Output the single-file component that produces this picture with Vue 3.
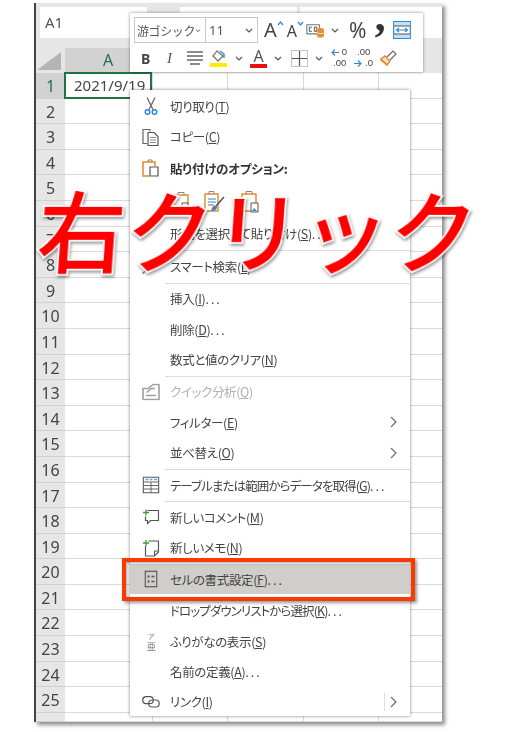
<script setup>
const rows = Array.from({ length: 26 }, (_, i) => i + 1)
const cols = [0, 1, 2, 3, 4]
</script>

<template>
  <div class="page">
    <div class="sheet">
      <div class="formula">
        <div class="namebox">A1</div>
        <div class="fbox second"></div>
        <div class="fbox third"></div>
      </div>
      <div class="headrow">
        <div class="corner"><i></i></div>
        <div class="colhead active">A</div>
        <div class="colhead b-col"></div>
        <div class="colhead c-col"></div>
        <div class="colhead d-col"></div>
        <div class="colhead e-col"></div>
      </div>
      <div v-for="r in rows" :key="r" class="row" :class="{ last: r === 26 }">
        <div class="rowhead" :class="{ active: r === 1 }">{{ r < 26 ? r : '' }}</div>
        <div v-for="c in cols" :key="c" class="cell" :class="'c' + c">
          <span v-if="r === 1 && c === 0" class="date">2021/9/19</span>
        </div>
      </div>

      <!-- mini toolbar -->
      <div class="mini">
        <div class="minirow">
          <div class="select font"><span>游ゴシック</span><svg width="8" height="5" viewBox="0 0 8 5"><path d="M1 1l3 3 3-3" class="chev"/></svg></div>
          <div class="select size"><span>11</span><svg width="8" height="5" viewBox="0 0 8 5"><path d="M1 1l3 3 3-3" class="chev"/></svg></div>
          <div class="grow"><span class="bigA">A</span><svg width="7" height="5" viewBox="0 0 7 5"><path d="M1 4l2.500-3L6 4" fill="none" stroke="#2b88d8" stroke-width="1.200"/></svg></div>
          <div class="shrink"><span class="smallA">A</span><svg width="7" height="5" viewBox="0 0 7 5"><path d="M1 1l2.500 3L6 1" fill="none" stroke="#2b88d8" stroke-width="1.200"/></svg></div>
          <svg class="ic cells" width="20" height="17" viewBox="0 0 24 20">
            <path d="M1 3h15v11H1z" fill="none" stroke="#777" stroke-width="1.300"/>
            <path d="M4 6h3M4 6v5h3M10 6h3v5h-3z" fill="none" stroke="#555" stroke-width="1.200"/>
            <ellipse cx="17.500" cy="9" rx="4" ry="2" fill="#ed8b2d"/>
            <path d="M13.500 9v8c0 2 8 2 8 0V9" fill="#ed8b2d"/>
            <path d="M14 13c2 1 5 1 7 0" stroke="#fff" fill="none"/>
          </svg>
          <svg class="chevs c-a" width="8" height="5" viewBox="0 0 8 5"><path d="M1 1l3 3 3-3" class="chev"/></svg>
          <span class="percent">%</span>
          <span class="comma">’</span>
          <svg class="ic wrapcol" width="18" height="18" viewBox="0 0 18 18">
            <path d="M.7.7h16.600v16.600H.7z" fill="#fff" stroke="#2b88d8" stroke-width="1.200"/>
            <path d="M1 1h16v4H1zM1 13h16v4H1z" fill="#bfe0f5"/>
            <path d="M1 5h16M1 13h16" stroke="#555"/>
            <path d="M3.500 9h11M6 7L3.500 9 6 11M12 7l2.500 2L12 11" fill="none" stroke="#2b88d8" stroke-width="1.100"/>
          </svg>
        </div>
        <div class="minirow second-row">
          <span class="b">B</span>
          <span class="i">I</span>
          <svg class="ic align" width="16" height="14" viewBox="0 0 16 14"><path d="M0 1h16M0 5h16M0 9h16M3 13h10" stroke="#666" stroke-width="1.300"/></svg>
          <div class="stack fill">
            <svg width="14" height="13" viewBox="0 0 14 13"><path d="M5 1L1 6l5 5 5-5z" fill="none" stroke="#666" stroke-width="1.200"/><path d="M8 1l4 3v4" fill="none" stroke="#2b88d8" stroke-width="1.400"/></svg>
            <i class="yellow"></i>
          </div>
          <svg class="chevs c-b" width="8" height="5" viewBox="0 0 8 5"><path d="M1 1l3 3 3-3" class="chev"/></svg>
          <div class="stack color"><span>A</span><i class="red"></i></div>
          <svg class="chevs c-c" width="8" height="5" viewBox="0 0 8 5"><path d="M1 1l3 3 3-3" class="chev"/></svg>
          <svg class="ic border" width="17" height="17" viewBox="0 0 17 17"><path d="M.5.500h16v16H.5z" fill="none" stroke="#888" stroke-dasharray="1 1"/><path d="M8.500 1v15M1 8.500h15" stroke="#555" stroke-width="1.200"/></svg>
          <svg class="chevs c-c" width="8" height="5" viewBox="0 0 8 5"><path d="M1 1l3 3 3-3" class="chev"/></svg>
          <div class="dec"><svg width="8" height="7" viewBox="0 0 8 7"><path d="M8 3.500H1M4 .5l-3 3 3 3" fill="none" stroke="#2b88d8" stroke-width="1.100"/></svg><span class="d0">0</span><span class="d00">.00</span></div>
          <div class="dec dec2"><span class="d00b">.00</span><svg width="8" height="7" viewBox="0 0 8 7"><path d="M0 3.500h7M4 .5l3 3-3 3" fill="none" stroke="#2b88d8" stroke-width="1.100"/></svg><span class="d0b">.0</span></div>
          <svg class="ic brush" width="18" height="17" viewBox="0 0 18 17"><path d="M2 9l6 6 3-4-5-5z" fill="#fbe3c8" stroke="#e8862a" stroke-width="1.400"/><path d="M2 9l-1 1 7 6 1-1" fill="#e8862a"/><path d="M8 7l6-6 3 3-6 6" fill="#fff" stroke="#666" stroke-width="1.100"/></svg>
        </div>
      </div>

      <!-- context menu -->
      <div class="menu">
        <div class="item">
          <svg class="mi" width="16" height="19" viewBox="0 0 16 19"><path d="M4 1l6 12M12 1L6 13" fill="none" stroke="#666" stroke-width="1.300"/><circle cx="4.500" cy="15.500" r="2.300" fill="none" stroke="#2b88d8" stroke-width="1.400"/><circle cx="11.500" cy="15.500" r="2.300" fill="none" stroke="#2b88d8" stroke-width="1.400"/></svg>
          <span>切り取り(<u>T</u>)</span>
        </div>
        <div class="item">
          <svg class="mi" width="18" height="19" viewBox="0 0 18 19"><path d="M5 16H1V2h7v2" fill="none" stroke="#666" stroke-width="1.200"/><path d="M6 5h6l4 4v9H6z" fill="#fff" stroke="#555" stroke-width="1.200"/><path d="M8 10h6M8 12.500h6M8 15h6" stroke="#888"/></svg>
          <span>コピー(<u>C</u>)</span>
        </div>
        <div class="item head">
          <svg class="mi" width="18" height="20" viewBox="0 0 18 20"><path d="M5 3H1v14h6" fill="none" stroke="#e8862a" stroke-width="1.500"/><path d="M5 3h8v4" fill="none" stroke="#e8862a" stroke-width="1.500"/><path d="M6 3V1h4v2" fill="none" stroke="#888"/><path d="M8 8h8v9H8z" fill="#fff" stroke="#555" stroke-width="1.200"/></svg>
          <b>貼り付けのオプション:</b>
        </div>
        <div class="pastes">
          <svg width="18" height="22" viewBox="0 0 18 22"><path d="M2 4h14v17H2z" fill="#fff" stroke="#e8862a" stroke-width="1.400"/><path d="M6 4V1.500h6V4" fill="none" stroke="#888"/><path d="M10 12h6v8h-6z" fill="#fff" stroke="#555"/></svg>
          <svg width="24" height="24" viewBox="0 0 24 24"><path d="M2 4h13v17H2z" fill="#fff" stroke="#e8862a" stroke-width="1.400"/><path d="M6 4V1.500h5V4" fill="none" stroke="#888"/><path d="M5 9h8M5 12h8" stroke="#2b88d8"/><path d="M5 15h6" stroke="#e0443e"/><path d="M21 7l-8 9" stroke="#555" stroke-width="1.600"/><path d="M9 18c2-3 4-3 5-1 0 3-3 4-6 4z" fill="#2b88d8"/></svg>
          <svg width="20" height="24" viewBox="0 0 20 24"><path d="M2 4h14v17H2z" fill="#fff" stroke="#e8862a" stroke-width="1.400"/><path d="M6 4V1.500h6V4" fill="none" stroke="#888"/><path d="M11 13h7v9h-7z" fill="#fff" stroke="#555"/><path d="M12 21l2-3 3 3z" fill="#2b88d8"/></svg>
        </div>
        <div class="item"><span>形式を選択して貼り付け(<u>S</u>)<span class="dots">...</span></span></div>
        <div class="sep"></div>
        <div class="item">
          <svg class="mi" width="19" height="19" viewBox="0 0 19 19"><path d="M1 17l6-5" stroke="#2b88d8" stroke-width="1.500"/><circle cx="11" cy="8" r="5" fill="none" stroke="#2b88d8" stroke-width="1.300"/></svg>
          <span>スマート検索(<u>L</u>)</span>
        </div>
        <div class="sep"></div>
        <div class="item"><span>挿入(<u>I</u>)<span class="dots">...</span></span></div>
        <div class="item"><span>削除(<u>D</u>)<span class="dots">...</span></span></div>
        <div class="item"><span>数式と値のクリア(<u>N</u>)</span></div>
        <div class="sep"></div>
        <div class="item off">
          <svg class="mi" width="18" height="17" viewBox="0 0 18 17"><path d="M1 5h5l5-4h6v15H1z" fill="none" stroke="#a0a0a0" stroke-width="1.600"/><path d="M4 12h10M5 9l4-4h4" fill="none" stroke="#a0a0a0" stroke-width="1.600"/></svg>
          <span>クイック分析(<u>Q</u>)</span>
        </div>
        <div class="item"><span>フィルター(<u>E</u>)</span><svg class="arrow" width="7" height="11" viewBox="0 0 7 11"><path d="M1 .5l5 5-5 5" fill="none" stroke="#666" stroke-width="1.100"/></svg></div>
        <div class="item"><span>並べ替え(<u>O</u>)</span><svg class="arrow" width="7" height="11" viewBox="0 0 7 11"><path d="M1 .5l5 5-5 5" fill="none" stroke="#666" stroke-width="1.100"/></svg></div>
        <div class="sep"></div>
        <div class="item tight">
          <svg class="mi" width="17" height="17" viewBox="0 0 17 17"><path d="M.7.700h15.600v15.600H.7z" fill="#fff" stroke="#555" stroke-width="1.300"/><path d="M3 3h3M7.500 3h2.500M11.500 3h3" stroke="#5aa7e0" stroke-width="1.500"/><path d="M1 5.500h15M1 9h15M1 12.500h15M8.500 5.500v11" stroke="#666"/></svg>
          <span>テーブルまたは範囲からデータを取得(<u>G</u>)<span class="dots">...</span></span>
        </div>
        <div class="sep"></div>
        <div class="item">
          <svg class="mi" width="17" height="17" viewBox="0 0 17 17"><path d="M5 2h11v10H8l-3 3v-3H3V8" fill="none" stroke="#555" stroke-width="1.200"/><path d="M3.500 1v6M.5 4h6" stroke="#3c9a3c" stroke-width="1.300"/></svg>
          <span>新しいコメント(<u>M</u>)</span>
        </div>
        <div class="item">
          <svg class="mi" width="17" height="18" viewBox="0 0 17 18"><path d="M6 2h10v11l-4 4H3V7" fill="none" stroke="#555" stroke-width="1.200"/><path d="M16 12h-4v5" fill="none" stroke="#555"/><path d="M3.500 1v6M.5 4h6" stroke="#3c9a3c" stroke-width="1.300"/></svg>
          <span>新しいメモ(<u>N</u>)</span>
        </div>
        <div class="item selected">
          <svg class="mi" width="13" height="17" viewBox="0 0 13 17"><path d="M.6.600h11.800v15.800H.6z" fill="none" stroke="#444" stroke-width="1.200"/><path d="M3 5h2v2H3zM3 10h2v2H3z" fill="#555"/><path d="M7 6h3M7 11h3" stroke="#555" stroke-width="1.300"/></svg>
          <span>セルの書式設定(<u>F</u>)<span class="dots">...</span></span>
        </div>
        <div class="item tight"><span>ドロップダウン<span class="gap"> </span>リストから選択(<u>K</u>)<span class="dots">...</span></span></div>
        <div class="item">
          <span class="mi ruby"><small>ア</small><em>亜</em></span>
          <span>ふりがなの表示(<u>S</u>)</span>
        </div>
        <div class="item"><span>名前の定義(<u>A</u>)<span class="dots">...</span></span></div>
        <div class="item">
          <svg class="mi" width="18" height="12" viewBox="0 0 18 12"><rect x=".7" y=".7" width="10.500" height="7" rx="3.500" fill="none" stroke="#555" stroke-width="1.200"/><rect x="6.700" y="4" width="10.500" height="7" rx="3.500" fill="none" stroke="#555" stroke-width="1.200"/></svg>
          <span>リンク(<u>I</u>)</span>
          <i class="vbar"></i>
          <svg class="arrow" width="7" height="11" viewBox="0 0 7 11"><path d="M1 .5l5 5-5 5" fill="none" stroke="#666" stroke-width="1.100"/></svg>
        </div>
      </div>
      <div class="highlight"></div>
    </div>
    <div class="title"><span>右</span><span>ク</span><span>リ</span><span>ッ</span><span>ク</span></div>
  </div>
</template>

<style>
html, body { margin: 0; background: #fff; }
</style>

<style scoped>
.page {
  position: relative;
  width: 528px;
  height: 732px;
  overflow: hidden;
  background: #fff;
  font-family: "Noto Sans CJK JP", "Noto Sans", sans-serif;
  color: #444;
}
.sheet {
  position: absolute;
  left: 34px;
  top: 3px;
  width: 408px;
  height: 719px;
  box-sizing: border-box;
  border-left: 2px solid #444;
  background: #fff;
  box-shadow: 3px 3px 4px rgba(0, 0, 0, .45);
  filter: blur(.35px);
}
.formula {
  height: 35px;
  background: #e6e6e6;
  display: flex;
  padding: 4px 0 0 4px;
  box-sizing: border-box;
}
.namebox {
  width: 107px;
  height: 31px;
  background: #fff;
  box-sizing: border-box;
  padding-left: 5px;
  font: 15px/31px "Noto Sans", sans-serif;
  color: #555;
}
.fbox { height: 31px; background: #fff; }
.second { width: 117px; margin-left: 33px; }
.third { flex: 1; margin-left: 3px; }
.headrow {
  display: flex;
  height: 35px;
  background: #e6e6e6;
  box-sizing: border-box;
  padding-top: 10px;
}
.corner { width: 29px; position: relative; }
.corner i {
  position: absolute;
  left: 1px;
  top: 4px;
  border-style: solid;
  border-width: 0 0 18px 24px;
  border-color: transparent transparent #b4b4b4 transparent;
}
.colhead {
  text-align: center;
  font: 16px/25px "Noto Sans", sans-serif;
  box-sizing: border-box;
  border-right: 1px solid #d4d4d4;
}
.colhead.active { width: 87px; background: #d2d2d2; color: #217346; }
.colhead.b-col { width: 75px; }
.colhead.c-col { width: 76px; }
.colhead.d-col { width: 75px; }
.colhead.e-col { flex: 1; border: 0; }
.row {
  display: flex;
  height: 25.6px;
  box-sizing: border-box;
}
.row.last { height: 9px; overflow: hidden; }
.rowhead {
  width: 29px;
  background: #e6e6e6;
  text-align: center;
  font: 16px/26px "Noto Sans", sans-serif;
  border-bottom: 1px solid #d0d0d0;
  box-sizing: border-box;
  color: #444;
}
.rowhead.active { background: #d2d2d2; color: #217346; }
.cell {
  box-sizing: border-box;
  border-right: 1px solid #d9d9d9;
  border-bottom: 1px solid #d9d9d9;
  position: relative;
}
.c0 { width: 88px; }
.c1 { width: 75px; }
.c2 { width: 76px; }
.c3 { width: 75px; }
.c4 { flex: 1; border-right: 0; }
.date {
  position: absolute;
  left: -1px;
  top: -1px;
  width: 88px;
  height: 27px;
  box-sizing: border-box;
  border: 2px solid #217346;
  padding-left: 8px;
  font: 15px/22px "Noto Sans", sans-serif;
  white-space: nowrap;
  color: #444;
}
.mini {
  position: absolute;
  left: 94px;
  top: 10px;
  width: 293px;
  height: 59px;
  box-sizing: border-box;
  background: #fff;
  box-shadow: 0 0 3px rgba(0, 0, 0, .45);
  padding: 4px 4px 0;
}
.minirow { display: flex; align-items: center; height: 26px; }
.select {
  height: 26px;
  box-sizing: border-box;
  border: 1px solid #c8c8c8;
  display: flex;
  align-items: center;
  justify-content: space-between;
  padding: 0 4px 0 2px;
  font-size: 12px;
  color: #555;
  white-space: nowrap;
  flex: none;
}
.font { width: 72px; letter-spacing: -.4px; }
.size { width: 53px; margin-left: -1px; font: 13px "Noto Sans", sans-serif; padding-left: 3px; }
.chev { fill: none; stroke: #555; stroke-width: 1.200; }
.grow, .shrink { display: flex; align-items: flex-start; flex: none; }
.grow { margin-left: 6px; }
.shrink { margin-left: 3px; }
.bigA { font: 20px/22px "Noto Sans", sans-serif; color: #444; }
.smallA { font: 16px/22px "Noto Sans", sans-serif; color: #444; margin-top: 1px; }
.grow svg, .shrink svg { margin-top: 2px; margin-left: 0; }
.mini .ic { display: block; flex: none; }
.cells { margin-left: 2px; }
.chevs { flex: none; }
.c-a { margin-left: 5px; }
.c-b { margin-left: 8px; }
.c-c { margin-left: 7px; }
.percent { font: 21px/26px "Noto Sans", sans-serif; color: #444; margin-left: 10px; flex: none; }
.comma {
  font: bold 44px/26px "Liberation Serif", serif;
  color: #333;
  margin-left: 6px;
  width: 15px;
  flex: none;
  transform: translateY(9px);
}
.wrapcol { margin-left: 6px; }
.second-row { margin-top: 2px; }
.b { font: bold 14px "Noto Sans", sans-serif; color: #444; margin-left: 7px; width: 12px; flex: none; }
.i { font: italic 15px "Liberation Serif", serif; color: #555; margin-left: 14px; width: 8px; flex: none; }
.second-row .align { margin-left: 12px; }
.stack { display: flex; flex-direction: column; align-items: center; width: 17px; flex: none; }
.fill { margin-left: 7px; }
.stack i { display: block; width: 17px; height: 4px; }
.yellow { background: #ffee00; }
.red { background: #e81010; }
.color { margin-left: 7px; }
.color span { font: 16px/15px "Noto Sans", sans-serif; color: #555; }
.second-row .border { margin-left: 9px; }
.dec {
  position: relative;
  width: 19px;
  height: 24px;
  margin-left: 8px;
  font: 9.500px/11px "Liberation Sans", sans-serif;
  color: #444;
  flex: none;
}
.dec svg { position: absolute; left: 0; top: 3px; }
.dec .d0 { position: absolute; right: 3px; top: 0; }
.dec .d00 { position: absolute; left: 2px; top: 11px; }
.dec2 { margin-left: 4px; }
.dec2 svg { top: 14px; }
.dec .d00b { position: absolute; left: 3px; top: 0; }
.dec .d0b { position: absolute; right: 0; top: 11px; }
.second-row .brush { margin-left: 6px; }
.menu {
  position: absolute;
  left: 94px;
  top: 87px;
  width: 280px;
  height: 626px;
  box-sizing: border-box;
  padding-top: 1px;
  background: #fff;
  box-shadow: 0 0 3px rgba(0, 0, 0, .5);
}
.item {
  height: 30.400px;
  display: flex;
  align-items: center;
  position: relative;
  padding-left: 40px;
  font-size: 12.500px;
  letter-spacing: -.35px;
  font-feature-settings: "palt";
  color: #444;
  white-space: nowrap;
}
.item.tight { letter-spacing: -.9px; }
.dots { letter-spacing: 2px; }
.gap { letter-spacing: 3px; }
.item u { text-underline-offset: 1px; }
.item b { font-weight: 700; color: #333; letter-spacing: -.2px; }
.head { height: 34px; }
.pastes {
  height: 33px;
  display: flex;
  align-items: center;
  gap: 13px;
  padding-left: 42px;
  box-sizing: border-box;
}
.sep { height: 2px; margin-left: 35px; border-bottom: 1px solid #dcdcdc; box-sizing: border-box; }
.mi {
  position: absolute;
  left: 21px;
  top: 50%;
  transform: translate(-50%, -50%);
}
.off { color: #b0b0b0; }
.arrow { position: absolute; right: 13px; top: 50%; transform: translateY(-50%); }
.selected { background: #cfcecb; margin-top: 1px; margin-bottom: 1px; }
.ruby { display: flex; flex-direction: column; align-items: center; line-height: 1; color: #777; }
.ruby small { font-size: 7px; line-height: 8px; }
.ruby em { font-size: 9px; line-height: 9px; font-style: normal; margin-top: 2px; }
.vbar { position: absolute; right: 25px; top: 6px; bottom: 6px; width: 1px; background: #ddd; }
.highlight {
  position: absolute;
  left: 86px;
  top: 555px;
  width: 293px;
  height: 43px;
  box-sizing: border-box;
  border: 4px solid #f93a00;
  box-shadow: 2px 2px 3px rgba(0, 0, 0, .4), inset 1px 1px 3px rgba(0, 0, 0, .35);
}
.title {
  position: absolute;
  left: 38px;
  top: 167px;
  display: flex;
  font-size: 88px;
  line-height: 122px;
  font-weight: 500;
  color: #ff0000;
  transform: skewX(-4deg);
  -webkit-text-stroke: 3.500px #fff;
  paint-order: stroke fill;
  filter: drop-shadow(1.500px 2px 1.500px rgba(0, 0, 0, .4));
}
.title span { width: 88px; text-align: center; }
</style>
